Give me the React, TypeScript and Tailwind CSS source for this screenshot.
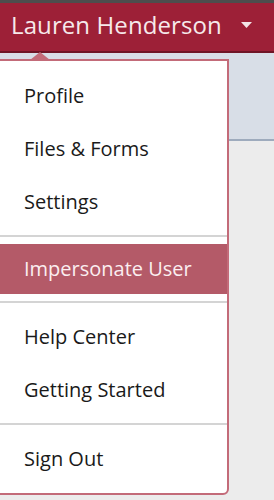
import { ReactNode } from "react";

function Item({ children, active }: { children: ReactNode; active?: boolean }) {
  return (
    <div
      className={
        active
          ? "h-[50px] flex items-center pl-[24px] bg-[#b45a68] text-[#fbeef0]"
          : "h-[53px] flex items-center pl-[24px] text-[#1a1a1a]"
      }
    >
      {children}
    </div>
  );
}

function Divider() {
  return <div className="h-[2px] bg-[#d4d4d4] my-[7px]" />;
}

export default function App() {
  return (
    <div
      className="relative w-[274px] h-[500px] overflow-hidden bg-[#ececec]"
      style={{ fontFamily: '"Open Sans", "Noto Sans", sans-serif' }}
    >
      <div className="h-[3px] bg-[#4d4d4d]" />
      <div className="h-[50px] bg-[#9d2037] border-b-2 border-[#6f1526] flex items-center justify-between pl-[11px] pr-[22px]">
        <span className="text-[24px] text-[#f6e9eb] leading-none -mt-[4px] tracking-[0.1px]">Lauren Henderson</span>
        <svg width="11" height="6" viewBox="0 0 11 6" className="-mt-[4px]">
          <polygon points="0,0 11,0 5.5,6" fill="#f3e3e6" />
        </svg>
      </div>
      <div className="h-[88px] bg-[#d8dee7] border-b-2 border-[#9eabbd]" />

      <div className="absolute left-[-2px] top-[59px] w-[231px] bg-white border-2 border-[#c36b79] rounded-br-[6px] pt-[8px] pb-[8px] text-[20px]">
        <svg width="20" height="8" viewBox="0 0 20 8" className="absolute left-[30px] top-[-9px]">
          <polygon points="0,8 10,0 20,8" fill="#c36b79" />
        </svg>
        <Item>Profile</Item>
        <Item>Files &amp; Forms</Item>
        <Item>Settings</Item>
        <Divider />
        <Item active>Impersonate User</Item>
        <Divider />
        <Item>Help Center</Item>
        <Item>Getting Started</Item>
        <Divider />
        <Item>Sign Out</Item>
      </div>
    </div>
  );
}
